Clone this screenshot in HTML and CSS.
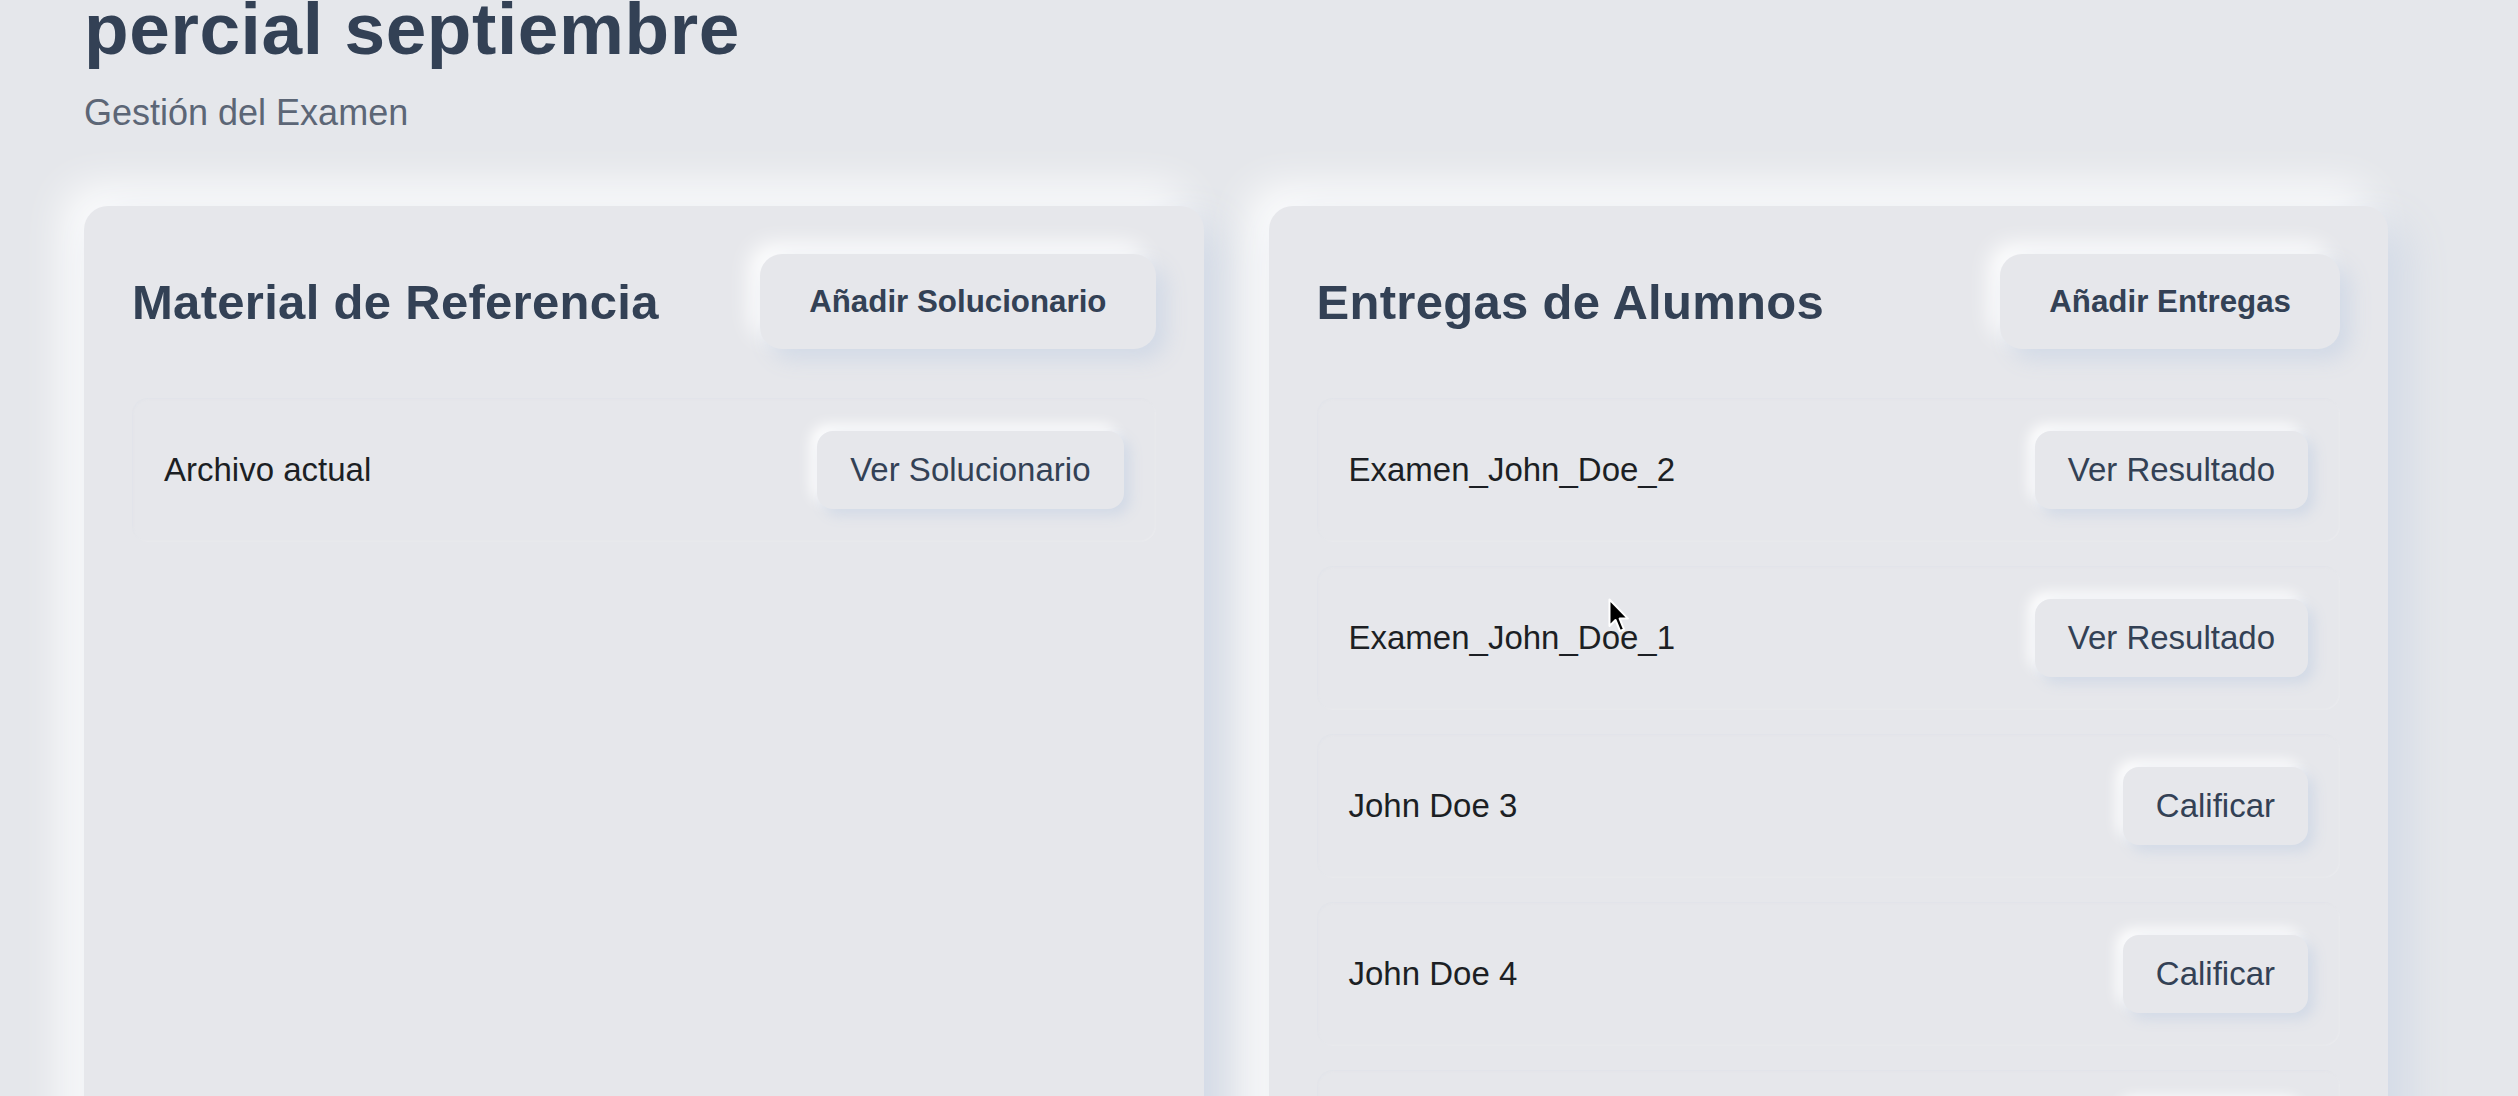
FILE: index.html
```html
<!DOCTYPE html>
<html lang="es">
<head>
<meta charset="utf-8">
<title>Gestión del Examen</title>
<link rel="stylesheet" href="styles.css">
</head>
<body>
<main class="page">
  <header class="page-head">
    <h1 class="page-title">percial septiembre</h1>
    <p class="page-sub">Gestión del Examen</p>
  </header>
  <div class="columns">
    <section class="card">
      <div class="card-head">
        <h2 class="card-title">Material de Referencia</h2>
        <button class="btn-add">Añadir Solucionario</button>
      </div>
      <div class="list">
        <div class="row">
          <span class="row-label">Archivo actual</span>
          <button class="btn-row">Ver Solucionario</button>
        </div>
      </div>
    </section>
    <section class="card">
      <div class="card-head">
        <h2 class="card-title">Entregas de Alumnos</h2>
        <button class="btn-add">Añadir Entregas</button>
      </div>
      <div class="list">
        <div class="row">
          <span class="row-label">Examen_John_Doe_2</span>
          <button class="btn-row">Ver Resultado</button>
        </div>
        <div class="row">
          <span class="row-label">Examen_John_Doe_1</span>
          <button class="btn-row">Ver Resultado</button>
        </div>
        <div class="row">
          <span class="row-label">John Doe 3</span>
          <button class="btn-row">Calificar</button>
        </div>
        <div class="row">
          <span class="row-label">John Doe 4</span>
          <button class="btn-row">Calificar</button>
        </div>
        <div class="row">
          <span class="row-label">John Doe 5</span>
          <button class="btn-row">Calificar</button>
        </div>
      </div>
    </section>
  </div>
</main>
<svg class="cursor" width="22" height="36" viewBox="0 0 22 36" aria-hidden="true">
  <path d="M1.5 1.5 L1.5 28 L7.5 22 L12 33 L16 31.3 L11.6 20.6 L20 20.6 Z" fill="#000" stroke="#fff" stroke-width="2" stroke-linejoin="round"/>
</svg>
</body>
</html>
```

FILE: styles.css
```css
* { box-sizing: border-box; }

html, body {
  margin: 0;
  background: #e5e7eb;
  font-family: "Liberation Sans", Arial, sans-serif;
  overflow: hidden;
}

.page {
  padding: 0 130px 0 84px;
}

.page-title {
  margin: -8px 0 0;
  font-size: 73px;
  line-height: 73px;
  font-weight: 700;
  letter-spacing: 0.6px;
  color: #334155;
}

.page-sub {
  margin: 28px 0 0;
  font-size: 36px;
  line-height: 40px;
  color: #5c6676;
}

.columns {
  display: grid;
  grid-template-columns: 1fr 1fr;
  gap: 65px;
  margin-top: 73px;
}

.card {
  background: #e6e7eb;
  border-radius: 24px;
  padding: 48px;
  min-height: 1100px;
  box-shadow: 18px 18px 44px #d1d9e6, -18px -18px 44px #ffffff;
}

.card-head {
  display: flex;
  align-items: center;
  justify-content: space-between;
  margin-bottom: 49px;
}

.card-title {
  margin: 0;
  font-size: 49px;
  font-weight: 700;
  color: #334155;
  letter-spacing: 0.3px;
}

.btn-add {
  height: 95px;
  padding: 0 49px;
  border: 0;
  border-radius: 22px;
  background: #e6e7eb;
  font-family: inherit;
  font-size: 31.3px;
  font-weight: 700;
  color: #334155;
  box-shadow: 10px 10px 22px #d1d9e6, -10px -10px 22px #ffffff;
}

.list {
  display: flex;
  flex-direction: column;
  gap: 24px;
}

.row {
  display: flex;
  align-items: center;
  justify-content: space-between;
  padding: 33px 32px;
  border-radius: 16px;
  background: #e6e7eb;
  box-shadow: inset 1px 1px 2px rgba(209, 217, 230, 0.15), inset -1px -1px 2px rgba(255, 255, 255, 0.18);
}

.row-label {
  font-size: 33px;
  color: #1c1f24;
}

.btn-row {
  height: 78px;
  padding: 0 33px;
  border: 0;
  border-radius: 16px;
  background: #e6e7eb;
  font-family: inherit;
  font-size: 33px;
  color: #334155;
  box-shadow: 6px 6px 14px #d1d9e6, -6px -6px 14px #ffffff;
}

.cursor {
  position: absolute;
  left: 1608px;
  top: 598px;
}
```
